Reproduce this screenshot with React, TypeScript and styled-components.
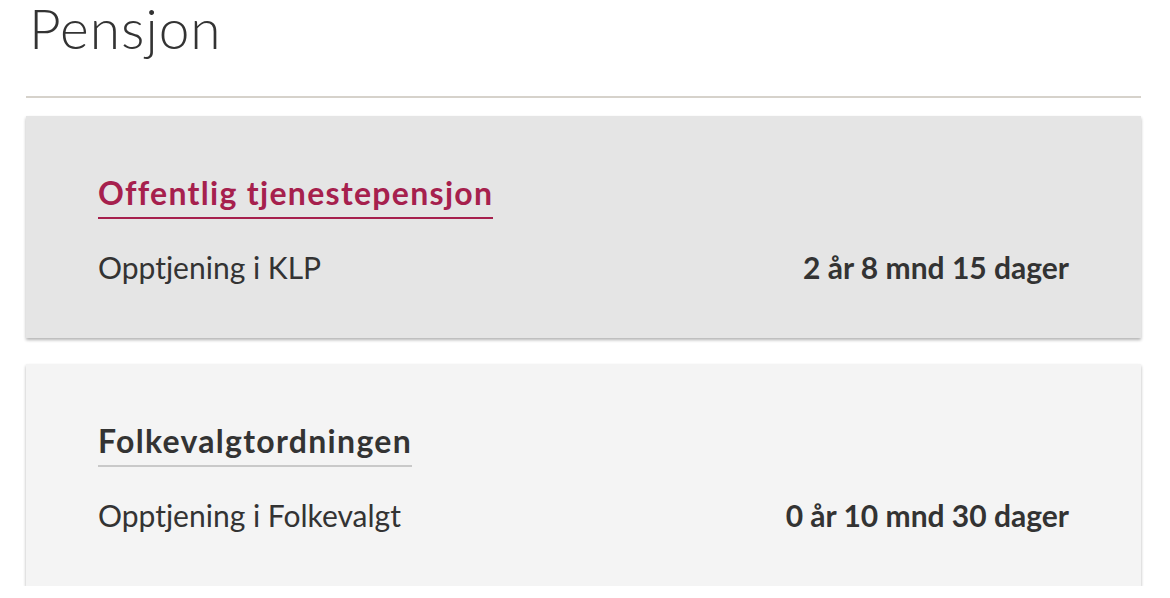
import React from "react";
import styled, { createGlobalStyle } from "styled-components";

const GlobalStyle = createGlobalStyle`
  html, body { margin: 0; padding: 0; background: #ffffff; }
  body { font-family: Lato, "Open Sans", "Liberation Sans", sans-serif; color: #333333; }
`;

const Page = styled.main`
  padding: 0 29px 0 26px;
`;

const Title = styled.h1`
  margin: 0 0 40px 3px;
  font-size: 55px;
  line-height: 56px;
  letter-spacing: 1px;
  font-weight: 300;
  color: #333333;
`;

const Rule = styled.hr`
  margin: 0 0 18px 0;
  border: 0;
  height: 2px;
  background: #d6d2cb;
`;

const CardList = styled.div`
  display: flex;
  flex-direction: column;
  gap: 26px;
`;

const Card = styled.section<{ $active?: boolean }>`
  background: ${(p) => (p.$active ? "#e5e5e5" : "#f4f4f4")};
  box-shadow: 0 2px 3px rgba(0, 0, 0, 0.3);
  padding: 59px 72px 53px 72px;
  display: flex;
  flex-direction: column;
  align-items: flex-start;
  gap: 30px;
`;

const CardTitle = styled.h2<{ $active?: boolean }>`
  margin: 0;
  font-size: 32px;
  line-height: 36px;
  letter-spacing: 1.3px;
  font-weight: 700;
  padding-bottom: 6px;
  color: ${(p) => (p.$active ? "#a6204d" : "#333333")};
  border-bottom: 2px solid ${(p) => (p.$active ? "#a6204d" : "#c9c9c9")};
`;

const Row = styled.div`
  align-self: stretch;
  display: flex;
  justify-content: space-between;
  align-items: baseline;
  font-size: 30px;
  line-height: 36px;
`;

const Label = styled.span`
  font-weight: 400;
`;

const Value = styled.span`
  font-weight: 700;
`;

const items = [
  { title: "Offentlig tjenestepensjon", label: "Opptjening i KLP", value: "2 år 8 mnd 15 dager", active: true },
  { title: "Folkevalgtordningen", label: "Opptjening i Folkevalgt", value: "0 år 10 mnd 30 dager", active: false },
];

export default function App() {
  return (
    <>
      <GlobalStyle />
      <Page>
        <Title>Pensjon</Title>
        <Rule />
        <CardList>
          {items.map((it) => (
            <Card key={it.title} $active={it.active}>
              <CardTitle $active={it.active}>{it.title}</CardTitle>
              <Row>
                <Label>{it.label}</Label>
                <Value>{it.value}</Value>
              </Row>
            </Card>
          ))}
        </CardList>
      </Page>
    </>
  );
}
